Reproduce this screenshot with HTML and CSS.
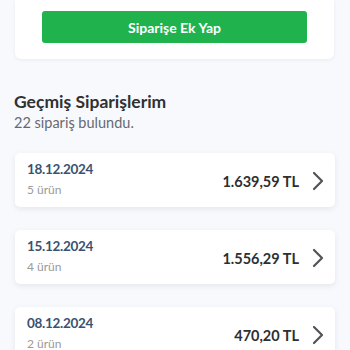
FILE: index.html
```html
<!DOCTYPE html>
<html lang="tr">
<head>
<meta charset="utf-8">
<link rel="stylesheet" href="styles.css">
</head>
<body>
<div class="top-card">
  <button class="add-btn">Siparişe Ek Yap</button>
</div>
<div class="section">
  <h2 class="title">Geçmiş Siparişlerim</h2>
  <p class="count">22 sipariş bulundu.</p>
</div>
<div class="list">
  <div class="order">
    <div class="info">
      <div class="date">18.12.2024</div>
      <div class="items">5 ürün</div>
    </div>
    <div class="price">1.639,59 TL</div>
    <svg class="chev" width="14" height="20" viewBox="0 0 14 20"><path d="M3 2 L11 10 L3 18" fill="none" stroke="#505358" stroke-width="2.2" stroke-linecap="round" stroke-linejoin="round"/></svg>
  </div>
  <div class="order">
    <div class="info">
      <div class="date">15.12.2024</div>
      <div class="items">4 ürün</div>
    </div>
    <div class="price">1.556,29 TL</div>
    <svg class="chev" width="14" height="20" viewBox="0 0 14 20"><path d="M3 2 L11 10 L3 18" fill="none" stroke="#505358" stroke-width="2.2" stroke-linecap="round" stroke-linejoin="round"/></svg>
  </div>
  <div class="order">
    <div class="info">
      <div class="date">08.12.2024</div>
      <div class="items">2 ürün</div>
    </div>
    <div class="price">470,20 TL</div>
    <svg class="chev" width="14" height="20" viewBox="0 0 14 20"><path d="M3 2 L11 10 L3 18" fill="none" stroke="#505358" stroke-width="2.2" stroke-linecap="round" stroke-linejoin="round"/></svg>
  </div>
</div>
</body>
</html>
```
FILE: styles.css
```css
html, body {
  margin: 0;
  padding: 0;
  background: #f8f9fc;
  font-family: Lato, "Open Sans", sans-serif;
  overflow: hidden;
  height: 350px;
}
.top-card {
  margin: 0 16px 0 15px;
  height: 59px;
  background: #fff;
  border-radius: 0 0 6px 6px;
  box-shadow: 0 1px 4px rgba(0,0,0,0.06);
  padding: 11px 27px 0 27px;
  box-sizing: border-box;
}
.add-btn {
  display: block;
  width: 100%;
  height: 32px;
  border: none;
  border-radius: 3px;
  background: #20b24c;
  color: #fff;
  font-family: inherit;
  font-weight: 700;
  font-size: 14px;
  padding: 0;
}
.section {
  padding: 33px 14px 0;
}
.title {
  margin: 0;
  font-size: 17.5px;
  font-weight: 700;
  color: #2f3133;
  line-height: 20px;
}
.count {
  margin: 1px 0 0;
  font-size: 14.5px;
  color: #666a70;
  line-height: 20px;
}
.list {
  display: flex;
  flex-direction: column;
  gap: 23px;
  padding: 20px 15px 0;
}
.order {
  height: 54px;
  background: #fff;
  border-radius: 5px;
  box-shadow: 0 2px 6px rgba(0,0,0,0.08);
  display: flex;
  align-items: center;
  padding: 0 10px 0 12px;
  box-sizing: border-box;
}
.info {
  flex: 1;
  align-self: stretch;
  padding-top: 7px;
}
.date {
  font-size: 13.5px;
  font-weight: 700;
  letter-spacing: -0.3px;
  color: #3a5272;
  line-height: 18px;
}
.items {
  margin-top: 4px;
  font-size: 12px;
  color: #9a9a9a;
  line-height: 16px;
}
.price {
  font-size: 14.5px;
  font-weight: 700;
  color: #2d2f31;
  margin-right: 12px;
  padding-top: 2px;
}
.chev {
  display: block;
  margin-top: 2px;
}
```
